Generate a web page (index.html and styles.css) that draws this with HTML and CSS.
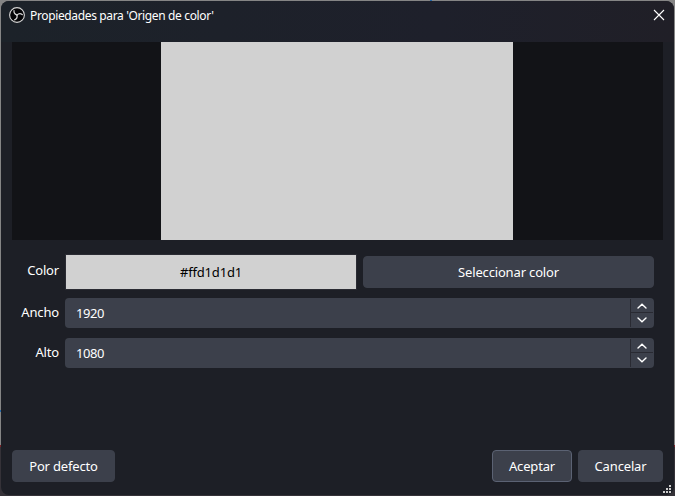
FILE: index.html
```html
<!DOCTYPE html>
<html lang="es">
<head>
<meta charset="utf-8">
<title>Propiedades para 'Origen de color'</title>
<link rel="stylesheet" href="styles.css">
</head>
<body>
<main class="window">
  <header class="titlebar">
    <svg class="logo" width="16" height="16" viewBox="0 0 16 16">
      <circle cx="8" cy="8" r="7.4" fill="#050507" stroke="#d5d5d5" stroke-width="1.1"/>
      <g fill="none" stroke="#d5d5d5" stroke-width="1.2" stroke-linecap="round">
        <path d="M8.2 8C6.2 7.5 4.7 6 5 3.5"/>
        <path d="M8.2 8C6.2 7.5 4.7 6 5 3.5" transform="rotate(120 8 8)"/>
        <path d="M8.2 8C6.2 7.5 4.7 6 5 3.5" transform="rotate(240 8 8)"/>
      </g>
    </svg>
    <h1 class="title">Propiedades para 'Origen de color'</h1>
    <svg class="close" width="12" height="12" viewBox="0 0 12 12"><path d="M1 1l10 10M11 1L1 11" stroke="#fff" stroke-width="1.1"/></svg>
  </header>
  <section class="preview"><div class="source"></div></section>
  <form class="form">
    <div class="row color-row">
      <label class="label">Color</label>
      <div class="swatch">#ffd1d1d1</div>
      <button class="button pick" type="button">Seleccionar color</button>
    </div>
    <div class="row">
      <label class="label">Ancho</label>
      <div class="spin"><span class="value">1920</span>
        <div class="steps">
          <span class="step"><svg width="10" height="6" viewBox="0 0 10 6"><path d="M1 5l4-3.8L9 5"/></svg></span>
          <span class="step"><svg width="10" height="6" viewBox="0 0 10 6"><path d="M1 1l4 3.8L9 1"/></svg></span>
        </div>
      </div>
    </div>
    <div class="row">
      <label class="label">Alto</label>
      <div class="spin"><span class="value">1080</span>
        <div class="steps">
          <span class="step"><svg width="10" height="6" viewBox="0 0 10 6"><path d="M1 5l4-3.8L9 5"/></svg></span>
          <span class="step"><svg width="10" height="6" viewBox="0 0 10 6"><path d="M1 1l4 3.8L9 1"/></svg></span>
        </div>
      </div>
    </div>
  </form>
  <footer class="footer">
    <button class="button defaults" type="button">Por defecto</button>
    <button class="button accept" type="button">Aceptar</button>
    <button class="button cancel" type="button">Cancelar</button>
  </footer>
  <svg class="grip" width="8" height="8" viewBox="0 0 8 8"><path fill="#ccc" d="M6 0h2v2h-2zM3 3h2v2h-2zM6 3h2v2h-2zM0 6h2v2h-2zM3 6h2v2h-2zM6 6h2v2h-2z"/></svg>
</main>
</body>
</html>
```
FILE: styles.css
```css
* { box-sizing: border-box; }
body {
  margin: 0;
  height: 496px;
  padding: 1px;
  overflow: hidden;
  background:
    linear-gradient(#2468a8, #2468a8) 430px 0 / 2px 1px no-repeat,
    linear-gradient(#2468a8, #2468a8) 0 410px / 1px 2px no-repeat,
    linear-gradient(#858585 0 445px, #7a2026 445px 447px, #353238 447px);
  color: #fff;
  font: 13px/18px "Noto Sans", "Open Sans", sans-serif;
  letter-spacing: -0.16px;
}
.window {
  position: relative;
  height: 494px;
  padding: 0 11px 13px;
  display: flex;
  flex-direction: column;
  border-radius: 8px;
  background: #1d1f26;
  overflow: hidden;
}
.titlebar {
  flex: 0 0 41px;
  margin: 0 -11px;
  padding: 6px 9px 0 8px;
  display: flex;
  align-items: flex-start;
  background: linear-gradient(90deg, #1c2229, #1e202b 65%, #201f27);
}
.title {
  flex: 1;
  margin: 0 0 0 5px;
  font: 12px/18px "Noto Sans", sans-serif;
  letter-spacing: -0.36px;
}
.close { margin-top: 2px; }
.preview {
  flex: 0 0 198px;
  display: flex;
  justify-content: center;
  background: #121317;
  padding-right: 1px;
}
.source { width: 352px; background: #d1d1d1; }
.form { margin: 14px 9px 0 0; display: grid; gap: 10px; }
.row { display: flex; height: 30px; }
.color-row { height: 36px; margin-bottom: -2px; align-items: center; }
.label { width: 47px; margin-right: 6px; padding-top: 5px; text-align: right; }
.color-row .label { padding: 0; margin-top: -5px; }
.swatch {
  width: 292px;
  height: 36px;
  border: 1px solid #2a2b33;
  background: #d1d1d1;
  color: #000;
  text-align: center;
  line-height: 34px;
}
.button {
  height: 32px;
  padding: 0;
  border: 1px solid #3c404b;
  border-radius: 4px;
  background: #3c404b;
  color: #fff;
  font: inherit;
  letter-spacing: inherit;
}
.pick { width: 291px; margin-left: 6px; }
.spin { flex: 1; display: flex; padding-left: 11px; background: #3c404b; border-radius: 4px; }
.value { flex: 1; line-height: 31px; letter-spacing: -0.4px; }
.steps { width: 23px; margin: 1px 1px 1px 0; border-left: 1px solid #292a32; display: flex; flex-direction: column; }
.step { flex: 1; display: flex; align-items: center; justify-content: center; }
.step:first-child { flex: 0 0 13px; }
.step + .step { border-top: 1px solid #292a32; }
.step path { fill: none; stroke: #fff; stroke-width: 1.4; stroke-linecap: round; }
.footer { margin-top: auto; display: flex; }
.defaults { width: 103px; margin-right: auto; }
.accept { width: 80px; border-color: #5b6273; }
.cancel { width: 85px; margin-left: 6px; }
.grip { position: absolute; right: 3px; bottom: 2px; }
```
